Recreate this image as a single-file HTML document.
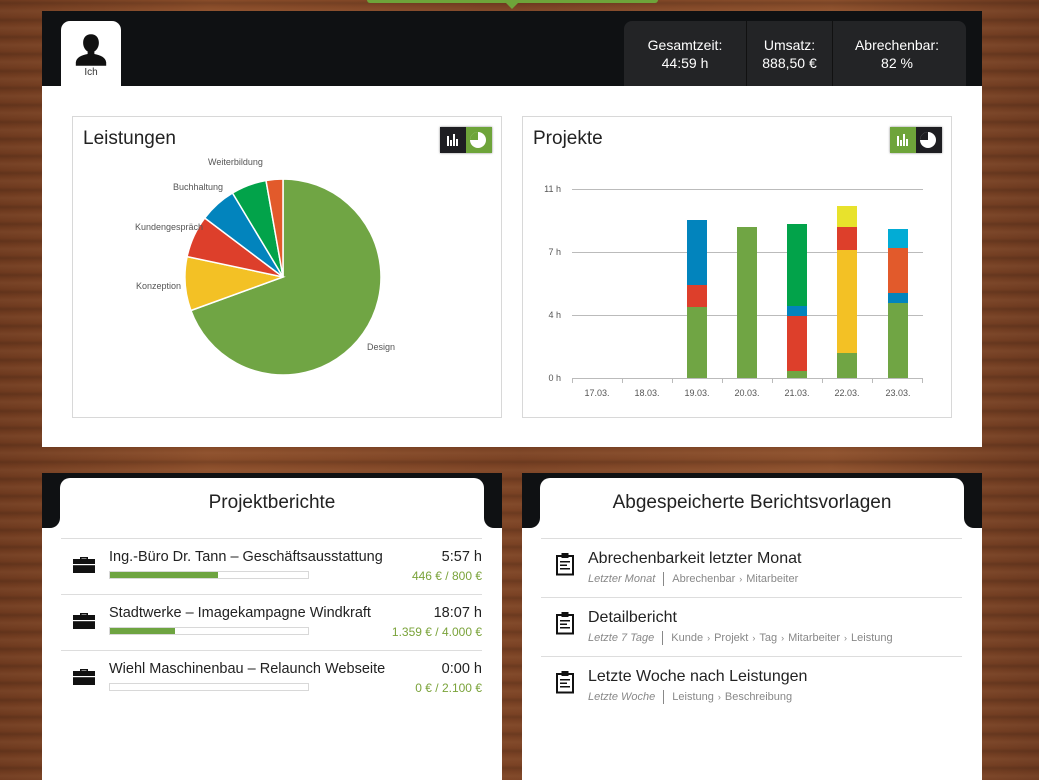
<!DOCTYPE html>
<html><head><meta charset="utf-8">
<style>
*{margin:0;padding:0;box-sizing:border-box}
body{width:1039px;height:780px;overflow:hidden;position:relative;font-family:"Liberation Sans",sans-serif;color:#222;
background:
repeating-linear-gradient(180deg,rgba(0,0,0,0) 0px,rgba(0,0,0,.12) 3px,rgba(0,0,0,0) 7px,rgba(255,200,150,.06) 11px,rgba(0,0,0,0) 17px),
linear-gradient(90deg,#6e3a1f,#8a4d2a 20%,#7a4224 50%,#8b4f2c 80%,#6d3a20);}
.abs{position:absolute}
.hdr{left:42px;top:11px;width:940px;height:75px;background:#0f1113}
.body1{left:42px;top:86px;width:940px;height:361px;background:#fff}
.tab{left:61px;top:21px;width:60px;height:66px;background:#fff;border-radius:9px 9px 0 0;text-align:center;font-size:10px;color:#333}
.stats{left:624px;top:21px;width:342px;height:65px;background:#232426;border-radius:8px 8px 0 0;color:#fff;font-size:14px;text-align:center;line-height:18px}
.stats div{position:absolute;top:15px}
.box{background:#fff;border:1px solid #d8d8d8}
.h2{font-size:19px;color:#222;position:absolute}
.tog{position:absolute;width:52px;height:26px;box-shadow:0 0 2px rgba(0,0,0,.5)}
.tog span{position:absolute;top:0;width:26px;height:26px}
.panel{background:#fff}
.ptab{background:#fff;border-radius:10px 10px 0 0;text-align:center;font-size:19px;color:#222;line-height:50px}
.row{position:absolute;left:0;right:0;border-top:1px solid #ddd}
.t{font-size:14.5px;color:#222;position:absolute}
.g{color:#7aa33a;font-size:12px;position:absolute;right:0}
.bar{position:absolute;left:48px;width:200px;height:8px;border:1px solid #d8d8d8;background:#fff}
.bar i{position:absolute;left:0;top:0;height:6px;background:#6ea441}
.sub{position:absolute;font-size:11px;color:#888}
.sub em{font-style:italic}
.sep{display:inline-block;width:1px;height:14px;background:#888;vertical-align:middle;margin:0 8px}
.ar{font-size:9px;margin:0 4px}
.dk{background:#0f1113}
</style></head><body>
<div class="abs" style="left:367px;top:0;width:291px;height:3px;background:#6ea43a;border-radius:0 0 4px 4px"></div>
<div class="abs" style="left:505px;top:2px;width:0;height:0;border-left:7px solid transparent;border-right:7px solid transparent;border-top:7px solid #6ea43a"></div>

<div class="abs hdr"></div>
<div class="abs body1"></div>
<div class="abs tab">
<svg width="36" height="36" viewBox="0 0 32 32" style="margin-top:11px"><path d="M16 2c-4.5 0-7 3.2-7 7.5 0 3.5 1.7 6.5 4 7.7v2.3c-5.5 1-10 3-10.5 7.5v3h27v-3c-.5-4.5-5-6.5-10.5-7.5v-2.3c2.3-1.2 4-4.2 4-7.7C23 5.2 20.5 2 16 2z" fill="#111"/></svg>
<div style="margin-top:-4px">Ich</div></div>
<div class="abs stats">
<div style="left:0;width:122px">Gesamtzeit:<br>44:59 h</div>
<div style="left:122px;width:1px;top:0;height:65px;background:#111"></div>
<div style="left:123px;width:85px">Umsatz:<br>888,50 €</div>
<div style="left:208px;width:1px;top:0;height:65px;background:#111"></div>
<div style="left:209px;width:128px">Abrechenbar:<br>82 %</div>
</div>

<div class="abs box" style="left:72px;top:116px;width:430px;height:302px"></div>
<div class="abs box" style="left:522px;top:116px;width:430px;height:302px"></div>
<div class="h2" style="left:83px;top:128px">Leistungen</div>
<div class="h2" style="left:533px;top:128px">Projekte</div>
<div class="tog" style="left:440px;top:127px"><span style="left:0;background:#1e1e22"></span><span style="left:26px;background:#6ea43a"></span></div>
<div class="tog" style="left:890px;top:127px"><span style="left:0;background:#6ea43a"></span><span style="left:26px;background:#1e1e22"></span></div>

<svg class="abs" style="left:0;top:0" width="1039" height="780" viewBox="0 0 1039 780">
<g fill="#fff"><rect x="447" y="136" width="2" height="10"/><rect x="450" y="140" width="2" height="6"/><rect x="453" y="134" width="2" height="12"/><rect x="456" y="139" width="2" height="7"/>
<rect x="897" y="136" width="2" height="10"/><rect x="900" y="140" width="2" height="6"/><rect x="903" y="134" width="2" height="12"/><rect x="906" y="139" width="2" height="7"/>
<circle cx="478" cy="140" r="8"/><circle cx="928" cy="140" r="8"/></g>
<path d="M478 140V132A8 8 0 0 0 470 140Z" fill="#6ea43a"/><path d="M928 140V132A8 8 0 0 0 920 140Z" fill="#1e1e22"/>
<g stroke="#fff" stroke-width="1.5">
<path d="M283 277L283 179A98 98 0 1 1 190.9 310.5Z" fill="#70a544"/>
<path d="M283 277L190.9 310.5A98 98 0 0 1 187.1 256.6Z" fill="#f3c125"/>
<path d="M283 277L187.1 256.6A98 98 0 0 1 204.7 218Z" fill="#dd3f2b"/>
<path d="M283 277L204.7 218A98 98 0 0 1 232.5 193Z" fill="#0284bd"/>
<path d="M283 277L232.5 193A98 98 0 0 1 266 180.5Z" fill="#02a34a"/>
<path d="M283 277L266 180.5A98 98 0 0 1 283 179Z" fill="#e25a2b"/>
</g>
<g font-family="Liberation Sans,sans-serif" font-size="9" fill="#555">
<text x="208" y="165">Weiterbildung</text><text x="173" y="190">Buchhaltung</text>
<text x="135" y="230">Kundengespräch</text><text x="136" y="289">Konzeption</text><text x="367" y="350">Design</text>
</g>
<g stroke="#bbb" stroke-width="1"><line x1="572" y1="189.5" x2="923" y2="189.5"/><line x1="572" y1="252.5" x2="923" y2="252.5"/><line x1="572" y1="315.5" x2="923" y2="315.5"/><line x1="572" y1="378.5" x2="923" y2="378.5"/>
<line x1="572.5" y1="378" x2="572.5" y2="383"/><line x1="622.5" y1="378" x2="622.5" y2="383"/><line x1="672.5" y1="378" x2="672.5" y2="383"/><line x1="722.5" y1="378" x2="722.5" y2="383"/><line x1="772.5" y1="378" x2="772.5" y2="383"/><line x1="822.5" y1="378" x2="822.5" y2="383"/><line x1="872.5" y1="378" x2="872.5" y2="383"/><line x1="922.5" y1="378" x2="922.5" y2="383"/></g>
<g font-family="Liberation Sans,sans-serif" font-size="9" fill="#555" text-anchor="end"><text x="561" y="192">11 h</text><text x="561" y="255">7 h</text><text x="561" y="318">4 h</text><text x="561" y="381">0 h</text></g>
<g font-family="Liberation Sans,sans-serif" font-size="9" fill="#555" text-anchor="middle"><text x="597" y="396">17.03.</text><text x="647" y="396">18.03.</text><text x="697" y="396">19.03.</text><text x="747" y="396">20.03.</text><text x="797" y="396">21.03.</text><text x="847" y="396">22.03.</text><text x="898" y="396">23.03.</text></g>
<rect x="687" y="307" width="20" height="71" fill="#70a544"/><rect x="687" y="285" width="20" height="22" fill="#dd3f2b"/><rect x="687" y="220" width="20" height="65" fill="#0284bd"/>
<rect x="737" y="227" width="20" height="151" fill="#70a544"/>
<rect x="787" y="371" width="20" height="7" fill="#70a544"/><rect x="787" y="316" width="20" height="55" fill="#dd3f2b"/><rect x="787" y="306" width="20" height="10" fill="#0284bd"/><rect x="787" y="224" width="20" height="82" fill="#02a34a"/>
<rect x="837" y="353" width="20" height="25" fill="#70a544"/><rect x="837" y="250" width="20" height="103" fill="#f3c125"/><rect x="837" y="227" width="20" height="23" fill="#dd3f2b"/><rect x="837" y="206" width="20" height="21" fill="#e8e22c"/>
<rect x="888" y="303" width="20" height="75" fill="#70a544"/><rect x="888" y="293" width="20" height="10" fill="#0284bd"/><rect x="888" y="248" width="20" height="45" fill="#e25a2b"/><rect x="888" y="229" width="20" height="19" fill="#02acd5"/>
</svg>

<!-- bottom left -->
<div class="abs panel" style="left:42px;top:510px;width:460px;height:270px"></div>
<div class="abs dk" style="left:42px;top:473px;width:460px;height:45px"></div>
<div class="abs dk" style="left:42px;top:473px;width:18px;height:55px;border-radius:0 0 10px 0"></div>
<div class="abs dk" style="left:484px;top:473px;width:18px;height:55px;border-radius:0 0 0 10px"></div>
<div class="abs ptab" style="left:60px;top:478px;width:424px;height:50px">Projektberichte</div>
<div class="abs" style="left:61px;top:538px;width:421px;height:200px">
<div class="row" style="top:0"></div><div class="row" style="top:56px"></div><div class="row" style="top:112px"></div>
<div style="position:absolute;top:0;left:0;right:0;height:56px">
<svg class="abs" style="left:12px;top:17px" width="22" height="18" viewBox="0 0 22 18"><path d="M7 4V2h8v2h-1.5V3.5h-5V4z" fill="#111"/><rect x="0" y="4" width="22" height="14" fill="#111"/><rect x="0" y="9" width="22" height="1.2" fill="#fff"/></svg>
<div class="t" style="left:48px;top:11px">Ing.-Büro Dr. Tann – Geschäftsausstattung</div><div class="t" style="right:0;top:11px">5:57 h</div>
<div class="bar" style="top:33px"><i style="width:108px"></i></div><div class="g" style="top:31px">446 € / 800 €</div></div>
<div style="position:absolute;top:56px;left:0;right:0;height:56px">
<svg class="abs" style="left:12px;top:17px" width="22" height="18" viewBox="0 0 22 18"><path d="M7 4V2h8v2h-1.5V3.5h-5V4z" fill="#111"/><rect x="0" y="4" width="22" height="14" fill="#111"/><rect x="0" y="9" width="22" height="1.2" fill="#fff"/></svg>
<div class="t" style="left:48px;top:11px">Stadtwerke – Imagekampagne Windkraft</div><div class="t" style="right:0;top:11px">18:07 h</div>
<div class="bar" style="top:33px"><i style="width:65px"></i></div><div class="g" style="top:31px">1.359 € / 4.000 €</div></div>
<div style="position:absolute;top:112px;left:0;right:0;height:56px">
<svg class="abs" style="left:12px;top:17px" width="22" height="18" viewBox="0 0 22 18"><path d="M7 4V2h8v2h-1.5V3.5h-5V4z" fill="#111"/><rect x="0" y="4" width="22" height="14" fill="#111"/><rect x="0" y="9" width="22" height="1.2" fill="#fff"/></svg>
<div class="t" style="left:48px;top:11px">Wiehl Maschinenbau – Relaunch Webseite</div><div class="t" style="right:0;top:11px">0:00 h</div>
<div class="bar" style="top:33px"></div><div class="g" style="top:31px">0 € / 2.100 €</div></div>
</div>

<!-- bottom right -->
<div class="abs panel" style="left:522px;top:510px;width:460px;height:270px"></div>
<div class="abs dk" style="left:522px;top:473px;width:460px;height:45px"></div>
<div class="abs dk" style="left:522px;top:473px;width:18px;height:55px;border-radius:0 0 10px 0"></div>
<div class="abs dk" style="left:964px;top:473px;width:18px;height:55px;border-radius:0 0 0 10px"></div>
<div class="abs ptab" style="left:540px;top:478px;width:424px;height:50px">Abgespeicherte Berichtsvorlagen</div>
<div class="abs" style="left:541px;top:538px;width:421px;height:200px">
<div class="row" style="top:0"></div><div class="row" style="top:59px"></div><div class="row" style="top:118px"></div>
<div style="position:absolute;top:0;left:0;right:0">
<svg class="abs" style="left:14px;top:14px" width="20" height="24" viewBox="0 0 20 24"><rect x="2" y="4" width="16" height="18.5" fill="#fff" stroke="#111" stroke-width="2"/><rect x="6.5" y="1" width="7" height="5" fill="#111"/><g fill="#111"><rect x="5" y="9" width="10" height="1.5"/><rect x="5" y="12.5" width="7" height="1.5"/><rect x="5" y="16" width="10" height="1.5"/></g></svg>
<div class="t" style="left:47px;top:12px;font-size:16px">Abrechenbarkeit letzter Monat</div>
<div class="sub" style="left:47px;top:34px"><em>Letzter Monat</em><span class="sep"></span>Abrechenbar<span class="ar">›</span>Mitarbeiter</div></div>
<div style="position:absolute;top:59px;left:0;right:0">
<svg class="abs" style="left:14px;top:14px" width="20" height="24" viewBox="0 0 20 24"><rect x="2" y="4" width="16" height="18.5" fill="#fff" stroke="#111" stroke-width="2"/><rect x="6.5" y="1" width="7" height="5" fill="#111"/><g fill="#111"><rect x="5" y="9" width="10" height="1.5"/><rect x="5" y="12.5" width="7" height="1.5"/><rect x="5" y="16" width="10" height="1.5"/></g></svg>
<div class="t" style="left:47px;top:12px;font-size:16px">Detailbericht</div>
<div class="sub" style="left:47px;top:34px"><em>Letzte 7 Tage</em><span class="sep"></span>Kunde<span class="ar">›</span>Projekt<span class="ar">›</span>Tag<span class="ar">›</span>Mitarbeiter<span class="ar">›</span>Leistung</div></div>
<div style="position:absolute;top:118px;left:0;right:0">
<svg class="abs" style="left:14px;top:14px" width="20" height="24" viewBox="0 0 20 24"><rect x="2" y="4" width="16" height="18.5" fill="#fff" stroke="#111" stroke-width="2"/><rect x="6.5" y="1" width="7" height="5" fill="#111"/><g fill="#111"><rect x="5" y="9" width="10" height="1.5"/><rect x="5" y="12.5" width="7" height="1.5"/><rect x="5" y="16" width="10" height="1.5"/></g></svg>
<div class="t" style="left:47px;top:12px;font-size:16px">Letzte Woche nach Leistungen</div>
<div class="sub" style="left:47px;top:34px"><em>Letzte Woche</em><span class="sep"></span>Leistung<span class="ar">›</span>Beschreibung</div></div>
</div>
</body></html>
